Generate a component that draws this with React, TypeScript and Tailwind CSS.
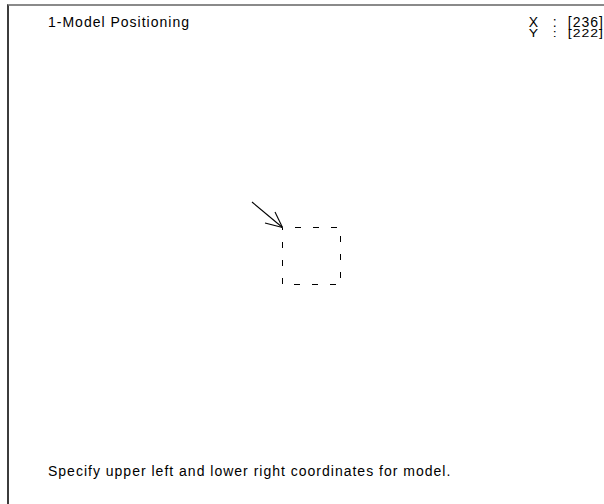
import React from "react";

export default function App() {
  const font = { fontFamily: '"Liberation Sans", Arial, sans-serif' };
  return (
    <div className="w-[604px] h-[504px] bg-white pt-1 pl-[7px] overflow-hidden" style={font}>
      <div className="relative h-full border-t-2 border-l-2 border-t-[#8a8a8a] border-l-[#3c3c3c] flex flex-col text-[14px] tracking-[1px] text-black">
        <div className="flex justify-between pl-[39px] pt-[9px] pr-0">
          <div className="leading-[14px]">1-Model Positioning</div>
          <div className="flex flex-col mt-[1px]">
            <div className="flex leading-[12px]">
              <span className="w-[24px]">X</span>
              <span className="w-[15px]">:</span>
              <span>[236]</span>
            </div>
            <div className="flex leading-[11px] mt-[1px] scale-y-[0.82] origin-top">
              <span className="w-[24px]">Y</span>
              <span className="w-[15px]">:</span>
              <span>[222]</span>
            </div>
          </div>
        </div>
        <div className="flex-1" />
        <div className="pl-[39px] pb-[26px] leading-[14px]">
          Specify upper left and lower right coordinates for model.
        </div>
        <svg className="absolute left-0 top-0" width="597" height="500" viewBox="0 0 597 500">
          <g transform="translate(-9,-6)" stroke="#000" strokeWidth="1" fill="none" shapeRendering="crispEdges">
            <path d="M282.5 227.5 H340.5 V284.5 H282.5 Z" strokeDasharray="6 12" strokeDashoffset="-12" />
          </g>
          <g transform="translate(-9,-6)" stroke="#000" strokeWidth="1.1" fill="none">
            <line x1="252" y1="202" x2="282.5" y2="227.5" />
            <line x1="275" y1="212" x2="282.5" y2="227.5" />
            <line x1="265" y1="223" x2="282.5" y2="227.5" />
          </g>
        </svg>
      </div>
    </div>
  );
}
